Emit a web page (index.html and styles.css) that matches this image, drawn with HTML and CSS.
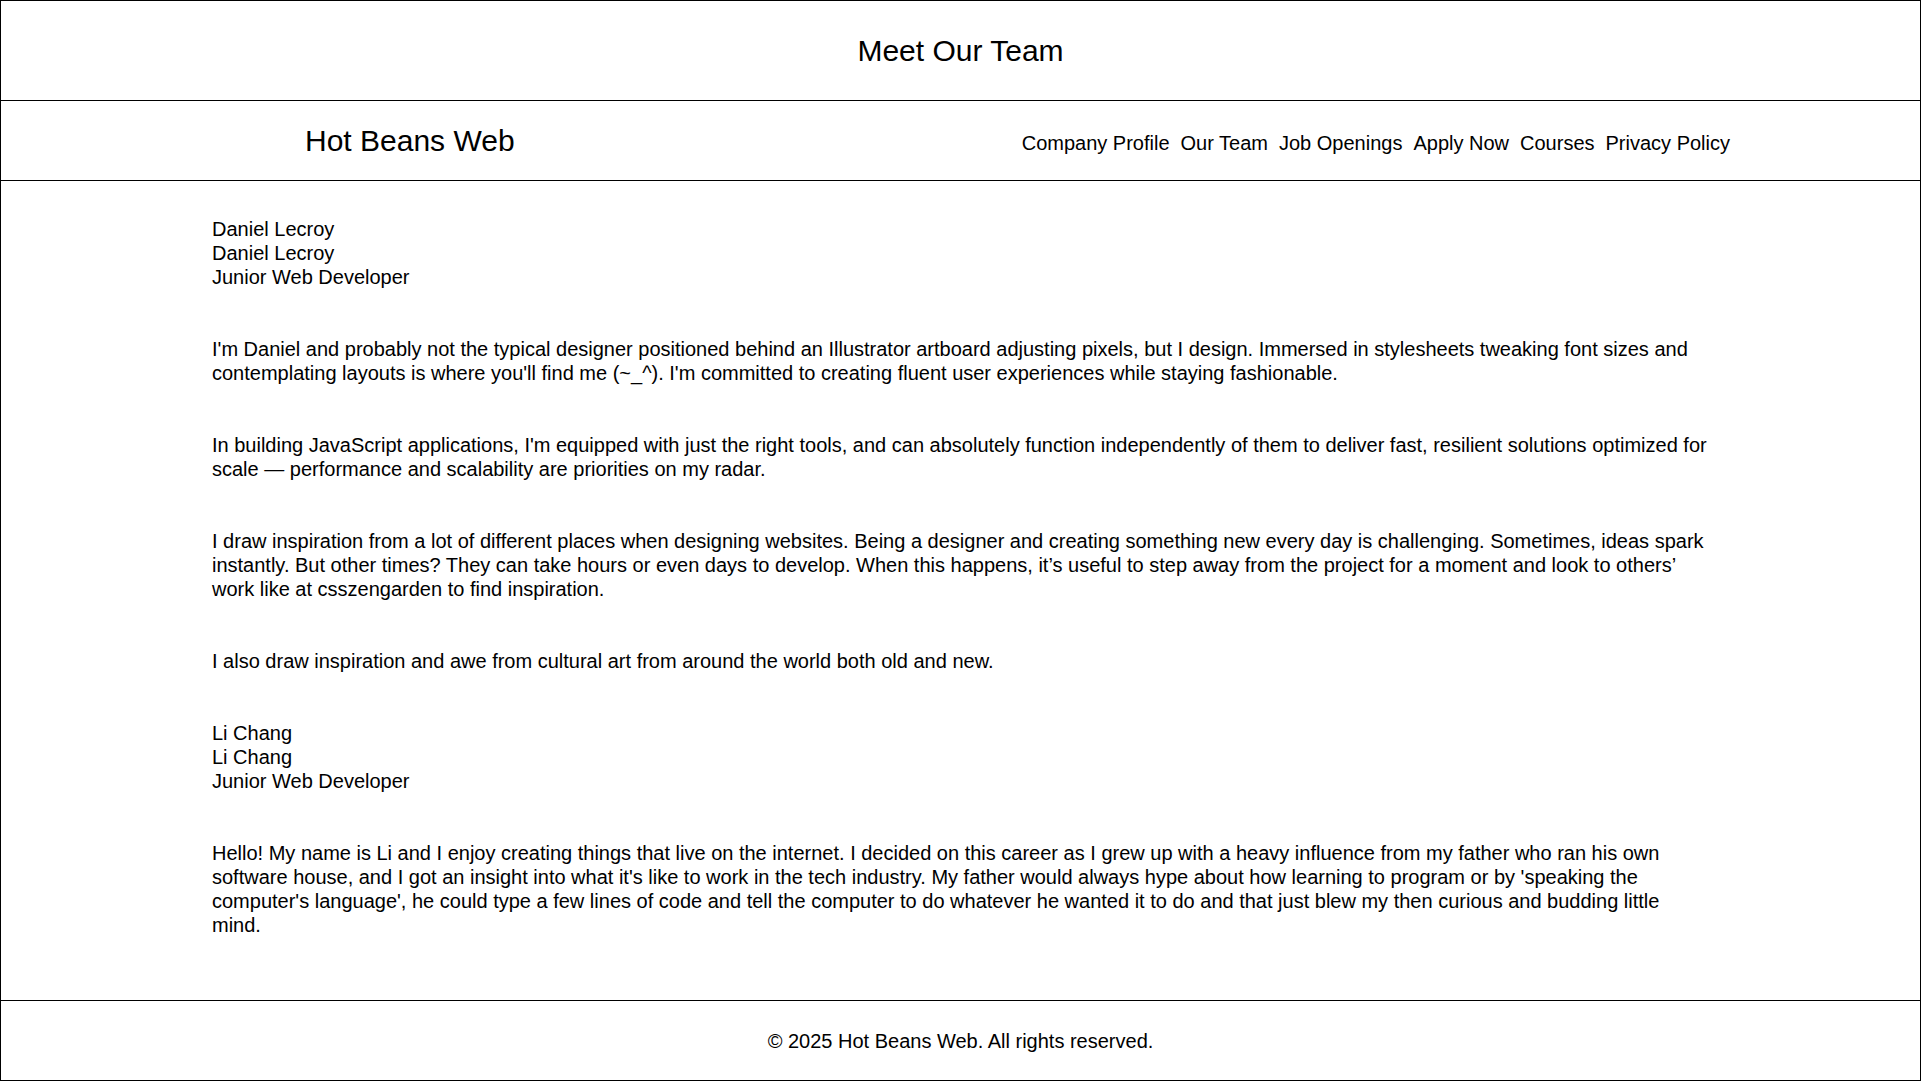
FILE: index.html
```html
<!DOCTYPE html>
<html lang="en">
<head>
<meta charset="utf-8">
<title>Meet Our Team - Hot Beans Web</title>
<link rel="stylesheet" href="styles.css">
</head>
<body>
<div class="page">
  <header class="site-header">
    <h1 class="page-title">Meet Our Team</h1>
  </header>
  <nav class="site-nav">
    <div class="logo">Hot Beans Web</div>
    <ul class="nav-links">
      <li><a href="#">Company Profile</a></li>
      <li><a href="#">Our Team</a></li>
      <li><a href="#">Job Openings</a></li>
      <li><a href="#">Apply Now</a></li>
      <li><a href="#">Courses</a></li>
      <li><a href="#">Privacy Policy</a></li>
    </ul>
  </nav>
  <main class="content">
    <div class="member-head">
      <div>Daniel Lecroy</div>
      <div>Daniel Lecroy</div>
      <div>Junior Web Developer</div>
    </div>
    <p>I'm Daniel and probably not the typical designer positioned behind an Illustrator artboard adjusting pixels, but I design. Immersed in stylesheets tweaking font sizes and contemplating layouts is where you'll find me (~_^). I'm committed to creating fluent user experiences while staying fashionable.</p>
    <p>In building JavaScript applications, I'm equipped with just the right tools, and can absolutely function independently of them to deliver fast, resilient solutions optimized for scale — performance and scalability are priorities on my radar.</p>
    <p>I draw inspiration from a lot of different places when designing websites. Being a designer and creating something new every day is challenging. Sometimes, ideas spark instantly. But other times? They can take hours or even days to develop. When this happens, it’s useful to step away from the project for a moment and look to others’ work like at csszengarden to find inspiration.</p>
    <p>I also draw inspiration and awe from cultural art from around the world both old and new.</p>
    <div class="member-head">
      <div>Li Chang</div>
      <div>Li Chang</div>
      <div>Junior Web Developer</div>
    </div>
    <p>Hello! My name is Li and I enjoy creating things that live on the internet. I decided on this career as I grew up with a heavy influence from my father who ran his own software house, and I got an insight into what it's like to work in the tech industry. My father would always hype about how learning to program or by 'speaking the computer's language', he could type a few lines of code and tell the computer to do whatever he wanted it to do and that just blew my then curious and budding little mind.</p>
  </main>
  <footer class="site-footer">
    <p>© 2025 Hot Beans Web. All rights reserved.</p>
  </footer>
</div>
</body>
</html>
```

FILE: styles.css
```css
* {
  box-sizing: border-box;
}

html, body {
  margin: 0;
  padding: 0;
  background: #fff;
}

body {
  font-family: "Liberation Sans", Arial, sans-serif;
  color: #000;
  font-size: 20px;
}

.page {
  border: 1px solid #000;
  height: 1081px;
  display: flex;
  flex-direction: column;
}

.site-header {
  height: 100px;
  border-bottom: 1px solid #000;
  display: flex;
  align-items: center;
  justify-content: center;
}

.page-title {
  margin: 0;
  font-size: 30px;
  font-weight: normal;
  line-height: 1;
}

.site-nav {
  height: 80px;
  border-bottom: 1px solid #000;
  display: flex;
  align-items: center;
  justify-content: space-between;
  padding: 0 190px 0 304px;
}

.logo {
  font-size: 30px;
  line-height: 1;
}

.nav-links {
  list-style: none;
  margin: 0;
  padding: 5px 0 0;
  display: flex;
  gap: 11px;
  line-height: 1;
}

.nav-links a {
  color: #000;
  text-decoration: none;
}

.content {
  flex: 1;
  padding: 36px 209px 0 211px;
  display: flex;
  flex-direction: column;
  gap: 48px;
  line-height: 24px;
}

.content p {
  margin: 0;
}

.site-footer {
  height: 80px;
  border-top: 1px solid #000;
  display: flex;
  align-items: center;
  justify-content: center;
}

.site-footer p {
  margin: 0;
  line-height: 1;
}
```
